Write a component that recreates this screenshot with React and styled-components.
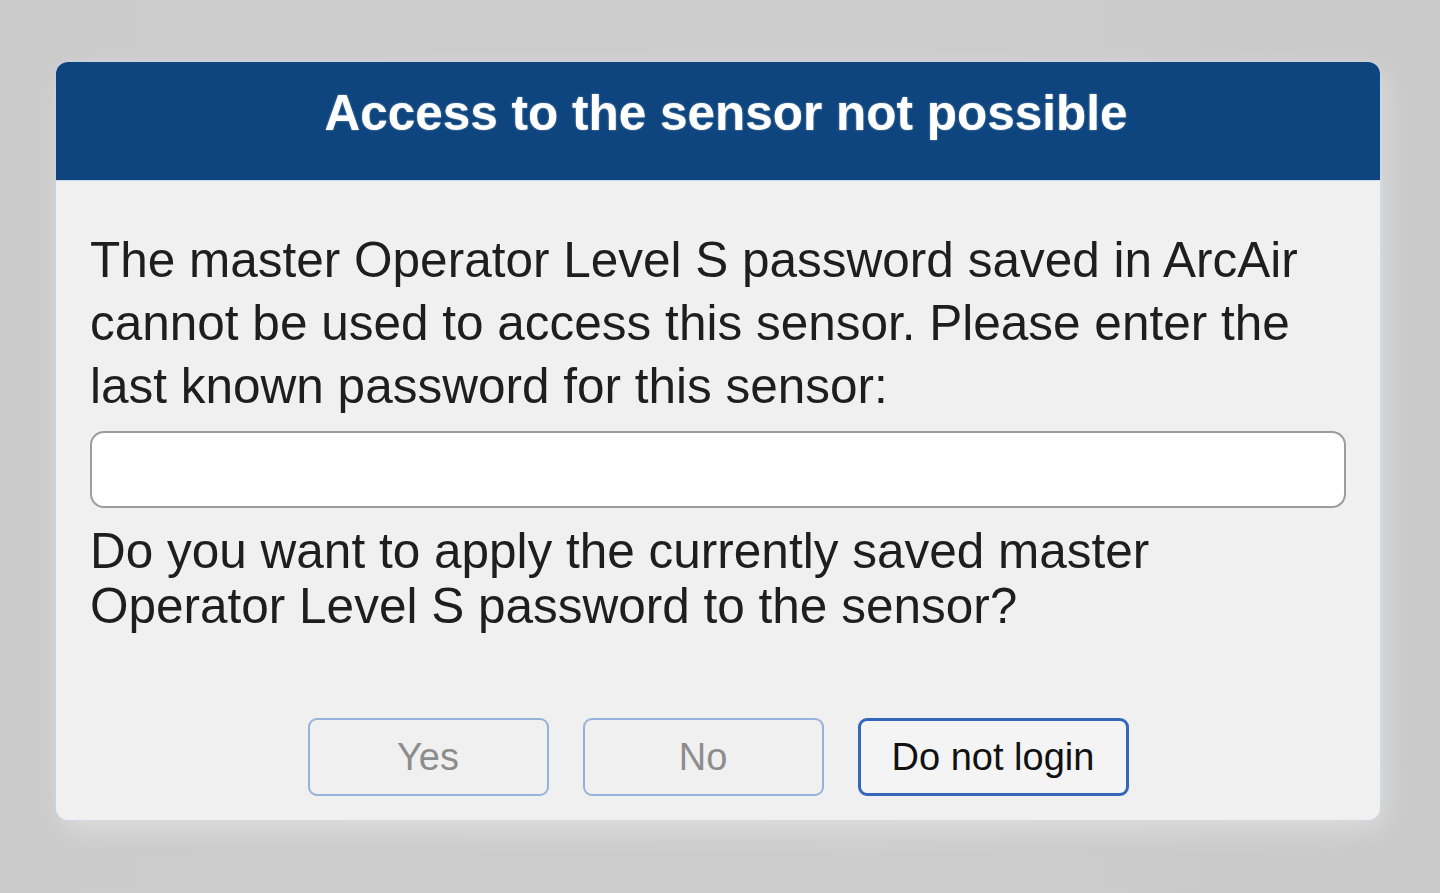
import styled, { createGlobalStyle } from "styled-components";

const GlobalStyle = createGlobalStyle`
    html, body {
        margin: 0;
        padding: 0;
        background: #cbcbcb;
    }
    body {
        font-family: "Liberation Sans", Arial, sans-serif;
    }
`
const Page = styled.div`
    width: 1440px;
    height: 893px;
    box-sizing: border-box;
    padding: 62px 60px 0 56px;
    background: linear-gradient(90deg, #cbcbcb 0%, #cdcdcd 60%, #c9c9c9 100%);
`
const Dialog = styled.div`
    width: 1324px;
    display: flex;
    flex-direction: column;
    background: #f0f0f0;
    border-radius: 12px;
    box-shadow: 6px 10px 28px rgba(255, 255, 255, 0.35), 0 0 0 1px rgba(190, 210, 235, 0.6);
    overflow: hidden;
`
const Header = styled.div`
    height: 119px;
    display: flex;
    align-items: center;
    justify-content: center;
    background: #0e457f;
    border-bottom: 1px solid #c9dcf0;
    box-sizing: border-box;
    padding: 0 0 18px 16px;
`
const Title = styled.h1`
    margin: 0;
    color: #ffffff;
    font-size: 49.5px;
    font-weight: 700;
    text-shadow: 0 0 2px rgba(255, 255, 255, 0.5);
`
const Body = styled.div`
    display: flex;
    flex-direction: column;
    padding: 47px 34px 24px 34px;
`
const Message = styled.p`
    margin: 0;
    font-size: 49.5px;
    line-height: ${p => p.$lh}px;
    color: #1e1e1e;
`
const PasswordInput = styled.input`
    box-sizing: border-box;
    width: 100%;
    height: 77px;
    margin: 14px 0 15px 0;
    border: 2px solid #9c9c9c;
    border-radius: 14px;
    background: #ffffff;
    font-size: 40px;
    padding: 0 16px;
    outline: none;
`
const ButtonRow = styled.div`
    display: flex;
    justify-content: center;
    gap: 34px;
    margin-top: 85px;
`
const DialogButton = styled.button`
    box-sizing: border-box;
    width: ${p => p.$w}px;
    height: 78px;
    border-radius: 9px;
    font-family: "Liberation Sans", Arial, sans-serif;
    font-size: 38px;
    padding: 0;
    background: ${p => (p.disabled ? "#f0f0f0" : "#f4f4f4")};
    border: ${p => (p.disabled ? "2px solid #94b2da" : "3px solid #3467ba")};
    color: ${p => (p.disabled ? "#8d8d8d" : "#111111")};
`

export default function App() {
    return (
        <>
            <GlobalStyle />
            <Page>
                <Dialog>
                    <Header>
                        <Title>Access to the sensor not possible</Title>
                    </Header>
                    <Body>
                        <Message $lh={63}>
                            The master Operator Level S password saved in ArcAir cannot be used to access this sensor. Please enter the last known password for this sensor:
                        </Message>
                        <PasswordInput type="password" />
                        <Message $lh={55}>
                            Do you want to apply the currently saved master Operator Level S password to the sensor?
                        </Message>
                        <ButtonRow>
                            <DialogButton $w={241} disabled>Yes</DialogButton>
                            <DialogButton $w={241} disabled>No</DialogButton>
                            <DialogButton $w={271}>Do not login</DialogButton>
                        </ButtonRow>
                    </Body>
                </Dialog>
            </Page>
        </>
    )
}
